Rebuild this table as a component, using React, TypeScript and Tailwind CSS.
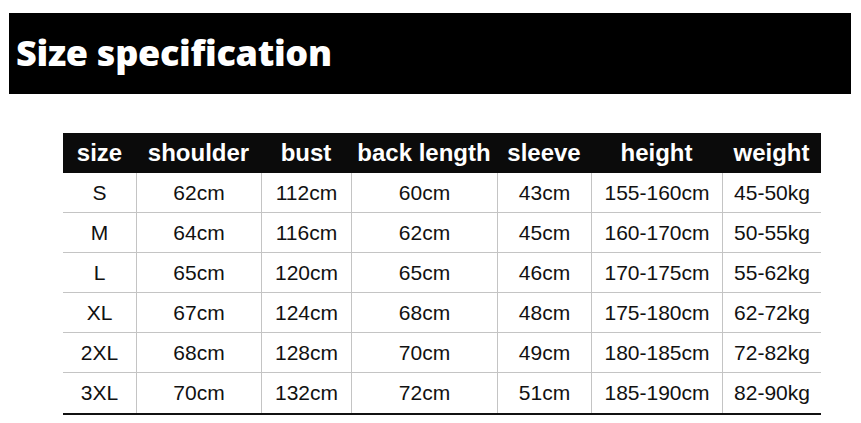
const headers = ["size", "shoulder", "bust", "back length", "sleeve", "height", "weight"];

const rows = [
  ["S", "62cm", "112cm", "60cm", "43cm", "155-160cm", "45-50kg"],
  ["M", "64cm", "116cm", "62cm", "45cm", "160-170cm", "50-55kg"],
  ["L", "65cm", "120cm", "65cm", "46cm", "170-175cm", "55-62kg"],
  ["XL", "67cm", "124cm", "68cm", "48cm", "175-180cm", "62-72kg"],
  ["2XL", "68cm", "128cm", "70cm", "49cm", "180-185cm", "72-82kg"],
  ["3XL", "70cm", "132cm", "72cm", "51cm", "185-190cm", "82-90kg"],
];

const cols = "grid grid-cols-[73px_125px_90px_146px_94px_131px_99px]";

export default function App() {
  return (
    <div className="w-[861px] h-[423px] bg-white overflow-hidden">
      <div className="pt-[13px] pl-[9px]">
        <div className="w-[842px] h-[81px] bg-black flex items-center pl-[7px] pb-[2px]">
          <h1 className="text-white text-[36px] font-extrabold tracking-[-0.3px] font-['Open_Sans',sans-serif]">
            Size specification
          </h1>
        </div>
      </div>
      <div className="pl-[63px] pt-[39px]">
        <div className="w-[758px] font-['Liberation_Sans',Arial,sans-serif]">
          <div className={`${cols} h-[40px] bg-[#0b0b0b]`}>
            {headers.map((h) => (
              <div key={h} className="flex items-center justify-center text-white font-bold text-[24px]">
                {h}
              </div>
            ))}
          </div>
          {rows.map((r, i) => (
            <div
              key={r[0]}
              className={`${cols} ${i === rows.length - 1 ? "h-[42px] border-b-2 border-[#111]" : "h-[40px] border-b border-[#c4c4c4]"}`}
            >
              {r.map((c, j) => (
                <div
                  key={j}
                  className={`flex items-center justify-center text-[21px] text-[#111] ${j > 0 ? "border-l border-[#c4c4c4]" : ""}`}
                >
                  {c}
                </div>
              ))}
            </div>
          ))}
        </div>
      </div>
    </div>
  );
}
